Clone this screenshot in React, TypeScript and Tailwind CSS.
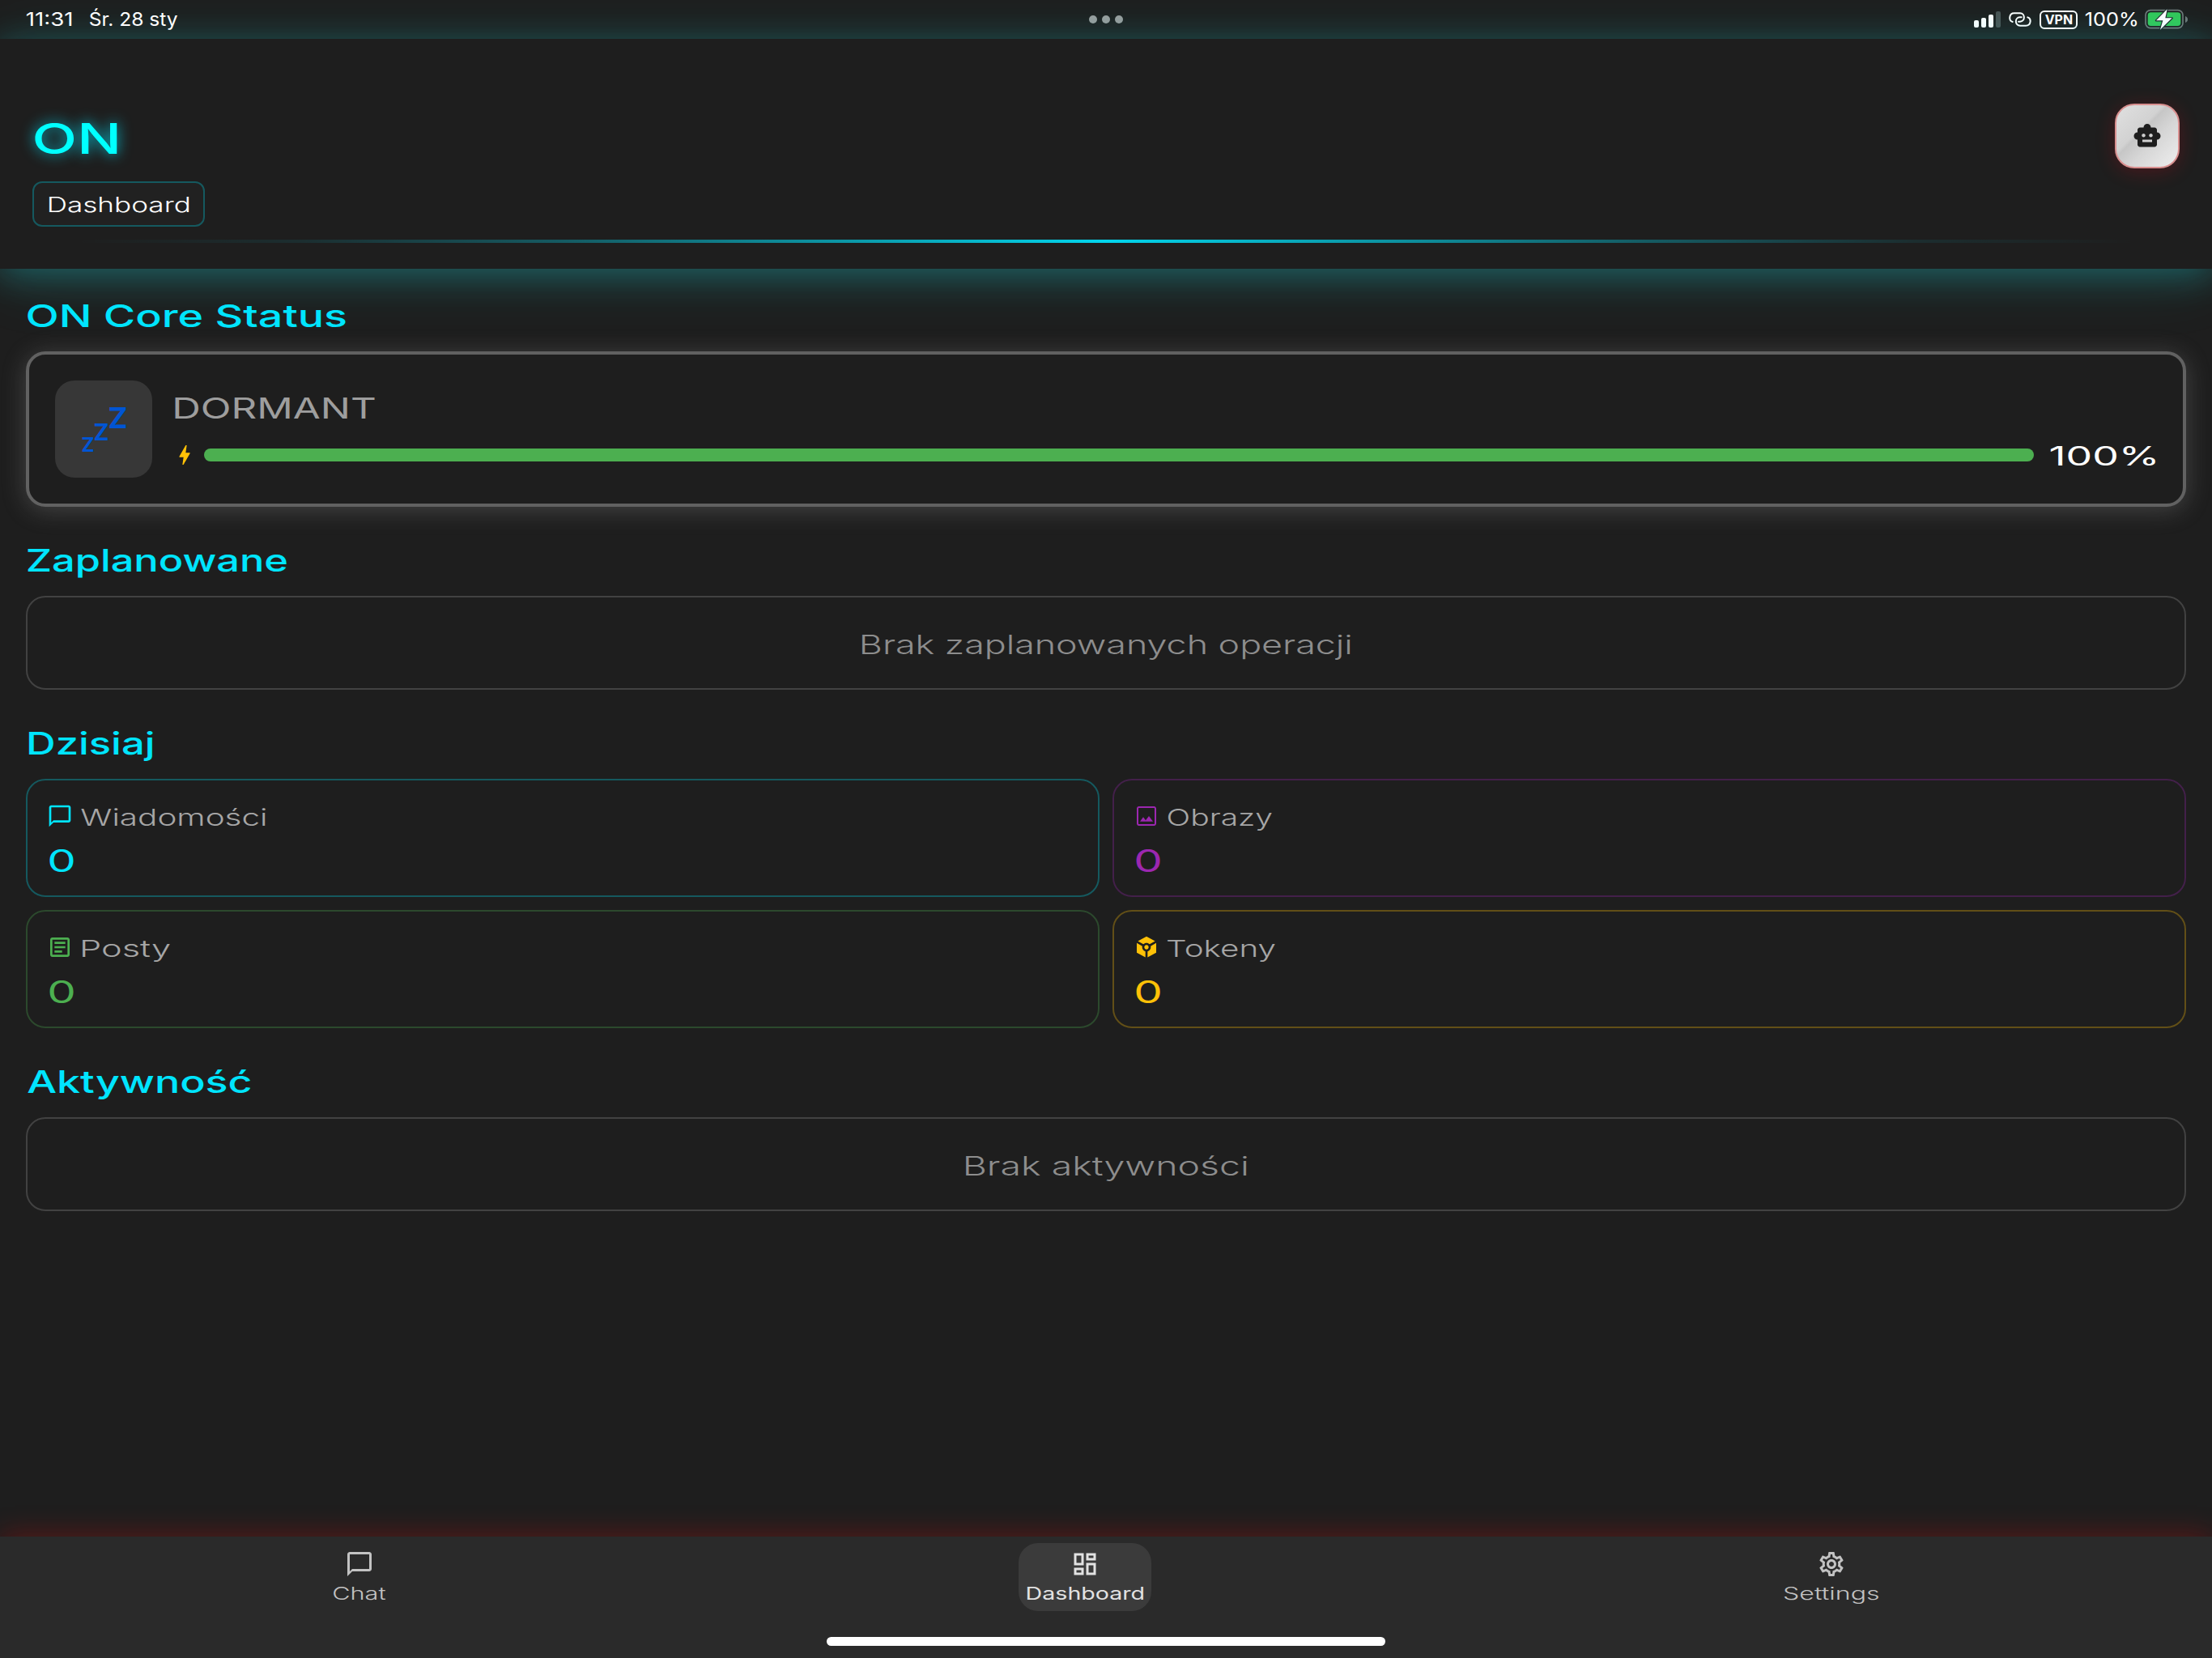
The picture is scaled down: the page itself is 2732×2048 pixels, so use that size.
import { useLayoutEffect, useRef } from "react";
import type { ReactNode } from "react";
import {
  MdBolt,
  MdChatBubbleOutline,
  MdOutlineArticle,
  MdOutlineDashboard,
  MdOutlineSettings,
  MdSmartToy,
  MdToken,
} from "react-icons/md";

/* Text stretched horizontally so that its ink fills the width given by its class. */
function Wide({ children, className }: { children: string; className: string }) {
  const box = useRef<HTMLSpanElement>(null);
  const inner = useRef<HTMLSpanElement>(null);

  useLayoutEffect(() => {
    const outerEl = box.current;
    const el = inner.current;
    const ctx = document.createElement("canvas").getContext("2d");
    if (!outerEl || !el || !ctx) return;
    const style = getComputedStyle(el);
    // Measured at ten times the size, since glyph bounds are rounded to whole pixels.
    ctx.font = `${style.fontWeight} ${parseFloat(style.fontSize) * 10}px ${style.fontFamily}`;
    const m = ctx.measureText(children);
    const left = m.actualBoundingBoxLeft / 10;
    const ink = m.actualBoundingBoxRight / 10 + left;
    const scale = outerEl.offsetWidth / ink;
    el.style.transform = `translateX(${left * scale}px) scaleX(${scale})`;
  }, [children]);

  return (
    <span ref={box} className={`block shrink-0 whitespace-nowrap text-left ${className}`}>
      <span ref={inner} className="inline-block origin-left">
        {children}
      </span>
    </span>
  );
}

function StatusBar() {
  return (
    <div className="flex h-12 shrink-0 items-center justify-between px-[30px] text-white">
      <div className="flex w-[700px] items-center gap-[23px] pl-[3px] font-normal">
        <Wide className="w-[55px] text-[23.5px] leading-[48px]">11:31</Wide>
        <Wide className="w-[108px] text-[23.5px] leading-[48px]">Śr. 28 sty</Wide>
      </div>
      <div className="flex gap-[6px]">
        <span className="size-[10px] rounded-full bg-[#9a9c9c]" />
        <span className="size-[10px] rounded-full bg-[#9a9c9c]" />
        <span className="size-[10px] rounded-full bg-[#9a9c9c]" />
      </div>
      <div className="flex w-[700px] items-center justify-end">
        <div className="flex h-5 items-end gap-[3px]">
          <span className="h-[9px] w-[6px] rounded-[2px] bg-white" />
          <span className="h-[12px] w-[6px] rounded-[2px] bg-white" />
          <span className="h-[16px] w-[6px] rounded-[2px] bg-white" />
          <span className="h-[20px] w-[6px] rounded-[2px] bg-[#4a5252]" />
        </div>
        <svg className="ml-[10px] h-[18px] w-[28px]" viewBox="0 0 84 54" fill="none" stroke="white" strokeWidth="6" strokeLinecap="round">
          <path d="M14 36C-1 32 0 4 20 4H42C61 4 62 34 42 35H36" />
          <path d="M70 19C85 24 83 50 63 50H42C22 50 21 20 41 19H47" />
        </svg>
        <span className="ml-[10px] flex h-[23px] w-[47px] items-center justify-center rounded-[6px] border-2 border-white">
          <Wide className="w-[33px] text-[15.5px] font-bold leading-[19px]">VPN</Wide>
        </span>
        <Wide className="ml-[10px] w-[63px] text-[23.5px] font-normal leading-[48px]">100%</Wide>
        <svg className="ml-[10px] h-[26px] w-[53px]" viewBox="0 0 159 78">
          <rect x="3" y="5" width="138" height="66" rx="18" fill="none" stroke="#6f7777" strokeWidth="5" />
          <path d="M150 27c7 3 9 7 9 12s-2 9-9 12z" fill="#6f7777" />
          <rect x="11" y="13" width="122" height="50" rx="11" fill="#34c759" />
          <path d="M83 1 42 43h25L57 77l44-43H76z" fill="white" stroke="#1f2a2a" strokeWidth="7" strokeLinejoin="round" paintOrder="stroke" />
        </svg>
      </div>
    </div>
  );
}

function Header() {
  return (
    <header className="h-[284px] shrink-0 bg-[#1e1e1e] px-10 pt-20 shadow-[0_8px_40px_rgba(30,229,240,0.28),0_8px_80px_rgba(30,229,225,0.12)]">
      <div className="flex items-start justify-between">
        <div>
          <Wide className="ml-[3px] w-[102px] text-[52px] font-medium leading-[87px] text-[#00ffff] [text-shadow:0_0_14px_rgba(0,229,255,0.8)]">
            ON
          </Wide>
          <div className="mt-[9px] flex h-14 w-[213px] items-center justify-center rounded-xl border-2 border-[#15595f] bg-[#212121]">
            <Wide className="mt-[2px] w-[172px] text-[25px] font-light leading-[52px] text-white">Dashboard</Wide>
          </div>
        </div>
        <button className="flex size-20 items-center justify-center rounded-3xl border-2 border-[#d98f8f] bg-[linear-gradient(135deg,#e0e0e0,#d2d2d2_38%,#c6c6c6_42%,#d6d6d6_60%,#eeeeee)] shadow-[0_4px_24px_rgba(255,0,32,0.2)]">
          <MdSmartToy className="size-9 text-[#1e1e1e]" />
        </button>
      </div>
      <div className="mt-4 h-1 bg-[linear-gradient(90deg,transparent_2%,rgba(0,229,255,0.08)_12.5%,rgba(0,229,255,0.31)_25%,rgba(0,229,255,0.6)_37.5%,rgba(0,229,255,0.92)_50%,rgba(0,229,255,0.6)_62.5%,rgba(0,229,255,0.31)_75%,rgba(0,229,255,0.08)_87.5%,transparent_98%)]" />
    </header>
  );
}

function Heading({ children, className }: { children: string; className: string }) {
  return (
    <h2 className="mb-6 h-10 pl-[2px] text-[38.5px] font-[450] leading-10 text-[#00e5ff]">
      <Wide className={className}>{children}</Wide>
    </h2>
  );
}

function Empty({ children, className }: { children: string; className: string }) {
  return (
    <div className="mb-[46px] flex h-[116px] items-center justify-center rounded-3xl border-2 border-[#424242] pt-[3px] text-[33px] font-light leading-10 text-[#8d8d8d]">
      <Wide className={className}>{children}</Wide>
    </div>
  );
}

function Stat({ icon, label, width, border, color }: { icon: ReactNode; label: string; width: string; border: string; color: string }) {
  return (
    <div className={`h-[146px] rounded-3xl border-2 px-6 pt-7 ${border} ${color}`}>
      <div className="flex h-8 items-center gap-[10px]">
        {icon}
        <div className="pt-[3px] text-[29px] font-light leading-8 text-[#a6a6a6]">
          <Wide className={width}>{label}</Wide>
        </div>
      </div>
      <Wide className="ml-[3px] mt-[19px] w-[30px] text-[38.5px] font-normal leading-10">0</Wide>
    </div>
  );
}

function ImageIcon() {
  return (
    <svg className="size-8" viewBox="0 0 24 24" fill="currentColor">
      <path d="M19 3H5c-1.1 0-2 .9-2 2v14c0 1.1.9 2 2 2h14c1.1 0 2-.9 2-2V5c0-1.1-.9-2-2-2zm.5 16c0 .3-.2.5-.5.5H5c-.3 0-.5-.2-.5-.5V5c0-.3.2-.5.5-.5h14c.3 0 .5.2.5.5zM6 17h12l-3.75-5-3 4L9 13z" />
    </svg>
  );
}

function Sleeping() {
  return (
    <svg className="size-[120px]" viewBox="0 0 120 120" fill="#0055d4" fontFamily="Inter, sans-serif" fontWeight="700">
      <text x="65.5" y="59" fontSize="36" textLength="24" lengthAdjust="spacingAndGlyphs">Z</text>
      <text x="47.5" y="74" fontSize="29" textLength="19" lengthAdjust="spacingAndGlyphs">Z</text>
      <text x="32.5" y="87.5" fontSize="24" textLength="16" lengthAdjust="spacingAndGlyphs">Z</text>
    </svg>
  );
}

function NavItem({ icon, label, width, active }: { icon: ReactNode; label: string; width: string; active?: boolean }) {
  return (
    <button
      className={
        active
          ? "flex h-[84px] flex-col items-center rounded-3xl bg-[#3b3b3b] px-[10.5px] pt-2 font-normal text-[#e2e2e2]"
          : "flex h-[84px] flex-col items-center px-[10px] pt-2 font-light text-[#c2c2c2]"
      }
    >
      {icon}
      <span className="mt-[5px] text-[21.5px] leading-[26px]">
        <Wide className={width}>{label}</Wide>
      </span>
    </button>
  );
}

export default function App() {
  return (
    <div className="flex h-[2048px] w-[2732px] flex-col overflow-hidden bg-[#1e1e1e] font-[Inter,sans-serif]">
      <StatusBar />
      <Header />
      <main className="flex-1 px-8 pt-[38px]">
        <Heading className="w-[393px]">ON Core Status</Heading>
        <section className="mb-[46px] flex h-48 gap-6 rounded-3xl border-4 border-[#616161] bg-[#1e1e1e] p-8 shadow-[0_4px_30px_rgba(158,158,158,0.3)]">
          <div className="size-[120px] shrink-0 rounded-3xl bg-[#373737]">
            <Sleeping />
          </div>
          <div className="flex-1 pt-[10px]">
            <Wide className="ml-1 w-[247px] text-[35px] font-normal leading-[48px] text-[#9e9e9e]">DORMANT</Wide>
            <div className="mt-[18px] flex h-8 items-center">
              <MdBolt className="size-8 text-[#ffc107]" />
              <div className="ml-2 h-4 flex-1 rounded-full bg-[#4caf50]" />
              <Wide className="ml-[21px] mr-[2px] mt-[3px] w-[129px] text-[32px] font-normal leading-8 text-white">100%</Wide>
            </div>
          </div>
        </section>

        <Heading className="w-[320px]">Zaplanowane</Heading>
        <Empty className="w-[603px]">Brak zaplanowanych operacji</Empty>

        <Heading className="ml-[2px] w-[153px]">Dzisiaj</Heading>
        <div className="mb-[46px] grid grid-cols-2 gap-4">
          <Stat icon={<MdChatBubbleOutline className="size-8" />} label="Wiadomości" width="w-[228px]" border="border-[#15595f]" color="text-[#00e5ff]" />
          <Stat icon={<ImageIcon />} label="Obrazy" width="ml-px w-[128px]" border="border-[#43204a]" color="text-[#9c27b0]" />
          <Stat icon={<MdOutlineArticle className="size-8" />} label="Posty" width="ml-[2px] w-[108px]" border="border-[#2c492d]" color="text-[#4caf50]" />
          <Stat icon={<MdToken className="size-8" />} label="Tokeny" width="w-[133px]" border="border-[#624f17]" color="text-[#ffc107]" />
        </div>

        <Heading className="w-[276px]">Aktywność</Heading>
        <Empty className="w-[347px]">Brak aktywności</Empty>
      </main>

      <nav className="flex h-[150px] shrink-0 flex-col items-center bg-[#2a2a2a] shadow-[0_-4px_32px_rgba(255,8,0,0.24)]">
        <div className="flex w-full justify-around px-4 pt-2">
          <NavItem icon={<MdChatBubbleOutline className="size-9" />} label="Chat" width="w-[64px]" />
          <NavItem icon={<MdOutlineDashboard className="size-9" />} label="Dashboard" width="w-[143px]" active />
          <NavItem icon={<MdOutlineSettings className="size-9" />} label="Settings" width="w-[116px]" />
        </div>
        <div className="mt-8 h-[11px] w-[690px] rounded-full bg-white" />
      </nav>
    </div>
  );
}
